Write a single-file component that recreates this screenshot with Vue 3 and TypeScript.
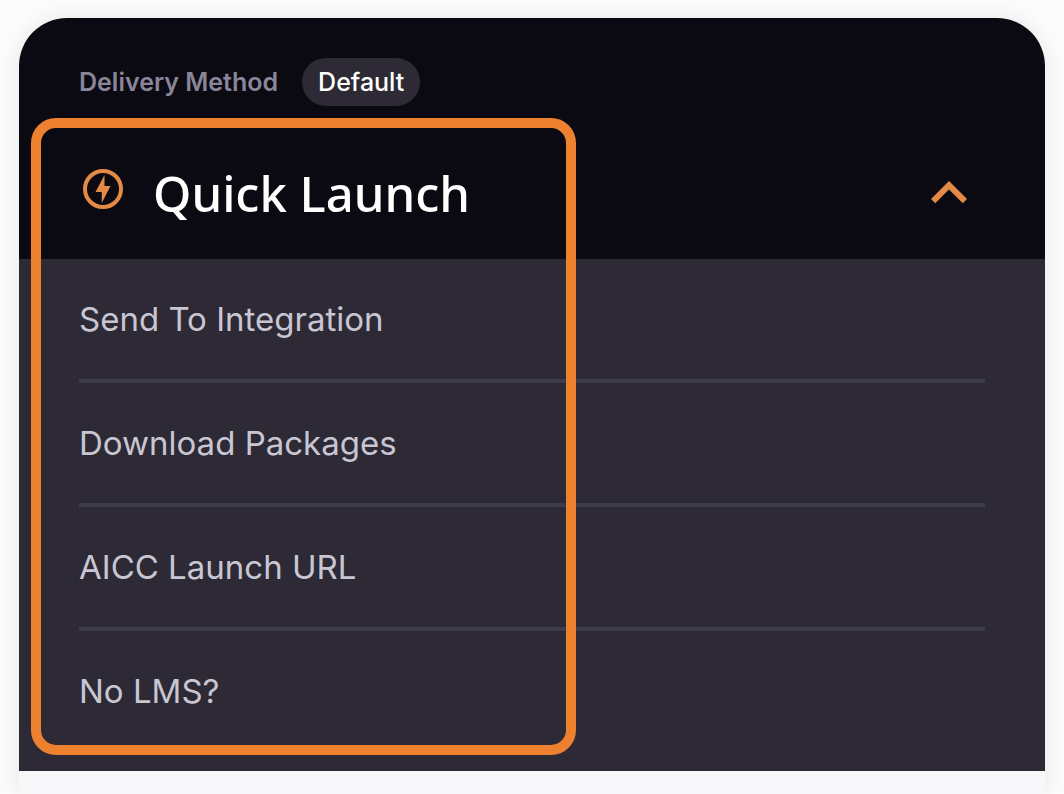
<script setup lang="ts">
import { ref } from 'vue'

const open = ref<boolean>(true)
const items: string[] = [
  'Send To Integration',
  'Download Packages',
  'AICC Launch URL',
  'No LMS?',
]
</script>

<template>
  <main class="page">
    <section class="card">
      <header class="head">
        <div class="delivery">
          <span class="label">Delivery Method</span>
          <span class="chip">Default</span>
        </div>
        <button
          class="toggle"
          type="button"
          :aria-expanded="open"
          aria-controls="launch-options"
          @click="open = !open"
        >
          <svg class="bolt" viewBox="0 0 24 28" aria-hidden="true">
            <circle cx="12" cy="12" r="9" />
            <path d="M12.75 5l-4.5 8.5h3.14V19l4.36-8.5h-3z" />
          </svg>
          <span class="title">Quick Launch</span>
          <svg class="chevron" :class="{ closed: !open }" viewBox="0 0 24 24" aria-hidden="true">
            <path d="M12 8l-6 6 1.41 1.41L12 10.83l4.59 4.58L18 14z" />
          </svg>
        </button>
      </header>
      <ul v-show="open" id="launch-options" class="list">
        <li v-for="item in items" :key="item" class="row">
          <a href="#" class="link">{{ item }}</a>
        </li>
      </ul>
      <div class="highlight" aria-hidden="true"></div>
    </section>
  </main>
</template>

<style>
body {
  background: #fcfcfc;
}
</style>

<style scoped>
.page {
  box-sizing: border-box;
  display: flex;
  min-height: 100vh;
  padding: 18px 19px 0;
  font-family: Inter, "Open Sans", sans-serif;
}

.card {
  position: relative;
  flex: 1;
  min-width: 0;
  background: #f8f8fb;
  border-radius: 48px 48px 0 0;
  box-shadow: 0 0 24px rgba(0, 0, 0, 0.09);
}

.head {
  padding: 40px 60px 30px;
  background: #0b0911;
  border-radius: 48px 48px 0 0;
}

.delivery {
  display: flex;
  align-items: center;
  gap: 24px;
  height: 48px;
  font-size: 25px;
  line-height: 48px;
}

.label {
  color: #89869a;
  font-weight: 600;
}

.chip {
  padding: 0 16px;
  color: #fff;
  font-weight: 500;
  background: #2d2a35;
  border-radius: 24px;
}

.toggle {
  display: flex;
  align-items: center;
  gap: 26px;
  width: 100%;
  margin-top: 51px;
  padding: 0;
  border: 0;
  background: none;
  color: #fff;
  font: 500 49px/72px "Noto Sans", sans-serif;
  text-align: left;
  cursor: pointer;
}

.title {
  flex: 1;
}

.bolt {
  width: 48px;
  height: 56px;
  fill: #e58a45;
}

.bolt circle {
  fill: none;
  stroke: #e58a45;
  stroke-width: 2;
}

.chevron {
  width: 72px;
  height: 72px;
  fill: #e58a45;
}

.chevron.closed {
  transform: rotate(180deg);
}

.list {
  margin: 0;
  padding: 0 60px 20px;
  list-style: none;
  background: #2d2a35;
}

.row {
  border-bottom: 4px solid #3e3b4b;
}

.row:last-child {
  border-bottom: 0;
}

.link {
  display: block;
  color: #c9c6d3;
  font-size: 33px;
  line-height: 120px;
  text-decoration: none;
}

.highlight {
  position: absolute;
  top: 100px;
  left: 12px;
  box-sizing: border-box;
  width: 53.1%;
  height: 637px;
  border: 10px solid #ee8130;
  border-radius: 25px;
  pointer-events: none;
}
</style>
